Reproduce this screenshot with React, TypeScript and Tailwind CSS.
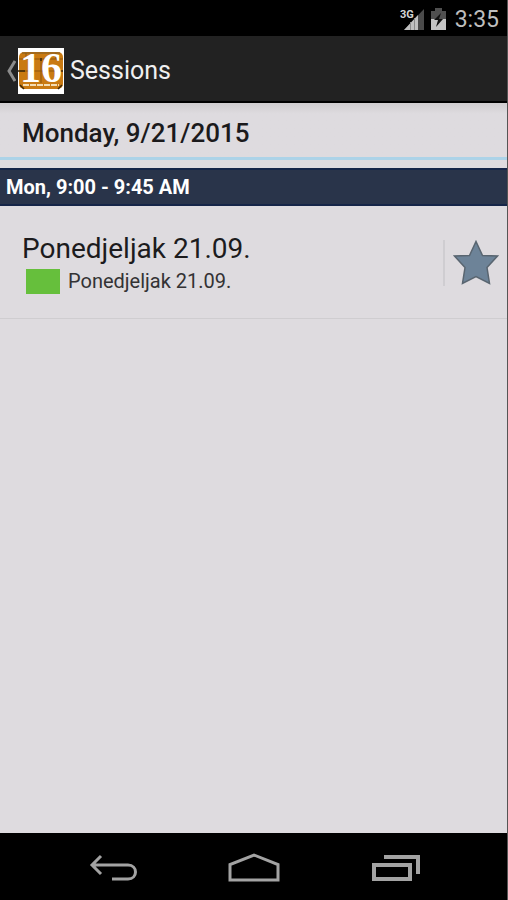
import { useState } from "react";

const sessions = [
  { title: "Ponedjeljak 21.09.", track: "Ponedjeljak 21.09." },
];

function StatusBar() {
  return (
    <div className="flex h-9 items-center justify-end bg-black pt-1 pr-2 text-[#b4b4b4]">
      {/* Signal */}
      <svg width="25" height="24" viewBox="0 0 25 24" aria-hidden="true">
        <path d="M25 1V22H5z" fill="#4a4a4a" />
        <path d="M19 7V22H5z" fill="#c0c0c0" />
        <path d="M15.500 10V22M11.500 14V22" stroke="#8a8a8a" strokeWidth="1" />
        <rect x="0" y="0" width="14" height="11" fill="#000" />
        <text x="1" y="10" fontFamily="Roboto, sans-serif" fontSize="11" fontWeight="700" fill="#d4d4d4">
          3G
        </text>
      </svg>
      {/* Battery */}
      <svg className="ml-1.5" width="17" height="24" viewBox="0 0 17 24" aria-hidden="true">
        <path d="M5 0h7v3h4v19H1V3h4z" fill="#505050" />
        <path d="M1 11h15v11H1z" fill="#c4c4c4" />
        <path d="M11 5L4 12h4l-2 7 7-8H9z" fill="#111" />
      </svg>
      <span className="ml-2 text-[23px] leading-7 text-[#bebebe]">3:35</span>
    </div>
  );
}

function AppIcon() {
  return (
    <svg className="overflow-visible" width="46" height="46" viewBox="0 0 46 46" aria-hidden="true">
      <rect width="46" height="46" fill="#fff" />
      <rect x="1" y="4" width="44" height="37" rx="5" fill="#c97a12" />
      <path
        d="M1 11h44M1 23h44M23 11v24M38 5v6M8 5v6"
        stroke="#8f560c"
        strokeWidth="1"
      />
      <path d="M4 5h38" stroke="#7c5a26" strokeWidth="1" />
      <path d="M0 23h7M23 10v3M40 23h5M2 37l4 4M44 37l-4 4" stroke="#3d2708" strokeWidth="1.5" />
      <path d="M5 37h36" stroke="#f3ddb4" strokeWidth="2" strokeDasharray="6 1" />
      <text
        x="23"
        y="34"
        textAnchor="middle"
        fontFamily="Liberation Serif, serif"
        fontSize="42"
        fontWeight="700"
        fill="#fff"
      >
        16
      </text>
    </svg>
  );
}

function ActionBar() {
  return (
    <header className="flex h-[67px] items-center border-b-2 border-black bg-[#222] pt-1 pl-1.5">
      <button type="button" aria-label="Navigate up" className="flex items-center">
        <svg className="mr-0.5" width="10" height="22" viewBox="0 0 10 22" fill="none" aria-hidden="true">
          <path d="M9 1L3 11l6 10" stroke="#8c8c8c" strokeWidth="3" />
        </svg>
        <AppIcon />
      </button>
      <h1 className="ml-1.5 text-[25px] leading-8 text-[#f0f0f0]">Sessions</h1>
    </header>
  );
}

function SessionRow({ title, track }: { title: string; track: string }) {
  const [starred, setStarred] = useState(false);

  return (
    <li className="flex h-[111px] items-center border-b border-[#cfcdd0]">
      <div className="min-w-0 flex-1 pl-[22px]">
        <div className="text-[28px] leading-9 text-[#1c1b1d]">{title}</div>
        <div className="flex items-center gap-2 pl-1">
          <span className="h-[25px] w-[34px] bg-[#66bf3c]" />
          <span className="text-xl leading-7 text-[#333234]">{track}</span>
        </div>
      </div>
      <button
        type="button"
        aria-label="Star session"
        aria-pressed={starred}
        onClick={() => setStarred(!starred)}
        className="flex h-[46px] items-center border-l-2 border-[#cfcdd1] pr-2 pl-2"
      >
        <svg width="46" height="46" viewBox="0 0 46 46" aria-hidden="true">
          <path
            d="M23 1.500l6.500 14L44.500 16 34 27.500 36.500 43.500 23 36.500 9.500 43.500 12 27.500 1.500 16l15-.500z"
            fill={starred ? "#e0a82e" : "#6d8398"}
            stroke="#596570"
            strokeWidth="1.5"
          />
        </svg>
      </button>
    </li>
  );
}

function NavBar() {
  return (
    <nav className="flex h-[67px] items-center justify-center gap-[90px] bg-black pt-0.5">
      <button type="button" aria-label="Back">
        <svg width="50" height="30" viewBox="0 0 50 30" fill="none" stroke="#a3a3a3" strokeWidth="3" aria-hidden="true">
          <path d="M13 3L4 12l9 9M4 12h36c10 0 10 14 0 14H24" />
        </svg>
      </button>
      <button type="button" aria-label="Home">
        <svg width="52" height="30" viewBox="0 0 52 30" fill="none" stroke="#a3a3a3" strokeWidth="3" aria-hidden="true">
          <path d="M2 27V11.500L26 2l24 9.500V27z" />
        </svg>
      </button>
      <button type="button" aria-label="Recent apps">
        <svg width="50" height="30" viewBox="0 0 50 30" fill="none" stroke="#a3a3a3" aria-hidden="true">
          <path d="M4 12h36v14H4z" strokeWidth="4" />
          <path d="M14 4h34v17" strokeWidth="4" />
        </svg>
      </button>
    </nav>
  );
}

export default function App() {
  return (
    <div className="flex min-h-screen flex-col border-r border-[#555] bg-[#dedbdf] font-[Roboto,sans-serif]">
      <StatusBar />
      <ActionBar />
      <main className="flex-1">
        <h2 className="border-b-[3px] border-[#acd3e8] bg-linear-to-b from-[#cfcdcf] to-[#dedbdf] to-20% pt-3.5 pb-2 pl-[22px] text-[26px] leading-8 font-medium text-[#1b1a1c]">
          Monday, 9/21/2015
        </h2>
        <section className="mt-2">
          <h3 className="border-y-2 border-[#152548] bg-[#29344a] py-1 pl-1.5 text-xl leading-[26px] font-bold text-white">
            Mon, 9:00 - 9:45 AM
          </h3>
          <ul className="pt-0.5">
            {sessions.map((s) => (
              <SessionRow key={s.title} title={s.title} track={s.track} />
            ))}
          </ul>
        </section>
      </main>
      <NavBar />
    </div>
  );
}
